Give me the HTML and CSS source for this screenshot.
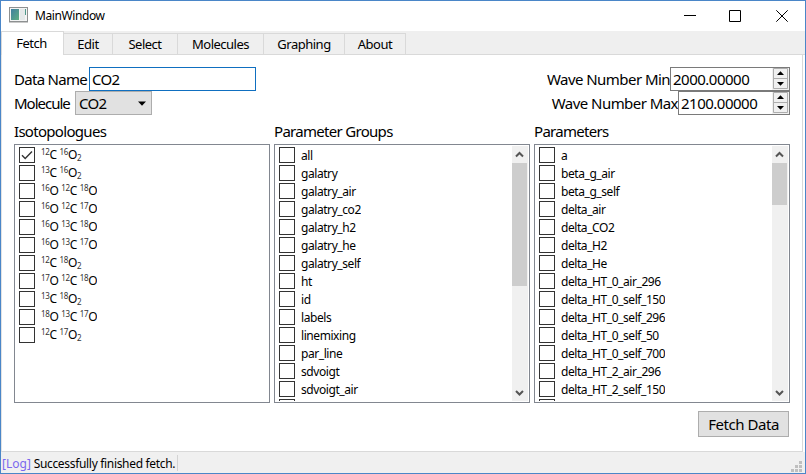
FILE: index.html
```html
<!DOCTYPE html>
<html lang="en">
<head>
<meta charset="utf-8">
<title>MainWindow</title>
<link rel="stylesheet" href="styles.css">
</head>
<body>
<div class="window">
  <header class="titlebar">
    <svg class="app-icon" width="19" height="16" viewBox="0 0 19 16">
      <defs><linearGradient id="g" x1="0" y1="0" x2="1" y2="1"><stop offset="0" stop-color="#3f7fa0"/><stop offset="1" stop-color="#5dae82"/></linearGradient></defs>
      <rect x=".5" y=".5" width="18" height="14" fill="#f3f4f4" stroke="#8d9091"/>
      <path d="M0 15.5h19" stroke="#c9c9c9"/>
      <rect x="2" y="2" width="8" height="11" fill="url(#g)"/>
      <rect x="11" y="2" width="5" height="11" fill="#e4e9ea"/>
      <path d="M16.5 2v6" stroke="#4f9a8c"/>
    </svg>
    <span class="title">MainWindow</span>
    <svg class="controls" width="106" height="13" viewBox="0 0 106 13" fill="none" stroke="#000">
      <path d="M0 5.5h12M45.5 .5h11v11h-11z"/><path d="M92.3 .3l11.4 11.4M103.7 .3L92.3 11.7"/>
    </svg>
  </header>
  <nav class="tabs">
    <span class="tab active">Fetch</span><span class="tab edit">Edit</span><span class="tab select">Select</span><span class="tab molecules">Molecules</span><span class="tab graphing">Graphing</span><span class="tab about">About</span>
  </nav>
  <main class="pane">
    <div class="row">
      <label class="lbl data-name">Data Name</label><span class="field line-edit">CO2</span>
      <label class="lbl wave push">Wave Number Min</label><span class="field spin min"><span>2000.00000</span><span class="steps"><svg viewBox="0 0 15 21"><path d="M.5 .5h14v20H.5zM0 10.5h15"/><path class="ink" d="M4 7L7.5 3.2L11 7zM4 14L7.5 17.8L11 14z"/></svg></span></span>
    </div>
    <div class="row">
      <label class="lbl molecule">Molecule</label><span class="combo">CO2<svg width="8" height="5" viewBox="0 0 8 5"><path d="M0 .5h8L4 4.7z"/></svg></span>
      <label class="lbl wave push">Wave Number Max</label><span class="field spin max"><span>2100.00000</span><span class="steps"><svg viewBox="0 0 15 21"><path d="M.5 .5h14v20H.5zM0 10.5h15"/><path class="ink" d="M4 7L7.5 3.2L11 7zM4 14L7.5 17.8L11 14z"/></svg></span></span>
    </div>
    <div class="columns">
      <section>
        <h2 class="iso-h">Isotopologues</h2>
        <div class="list"><ul class="iso">
          <li><i><svg width="14" height="14" viewBox="0 0 14 14"><path d="M2 7.2l3.2 3.2L12 3.6"/></svg></i><span><sup>12</sup>C <sup>16</sup>O<sub>2</sub></span></li>
          <li><i></i><span><sup>13</sup>C <sup>16</sup>O<sub>2</sub></span></li>
          <li><i></i><span><sup>16</sup>O <sup>12</sup>C <sup>18</sup>O</span></li>
          <li><i></i><span><sup>16</sup>O <sup>12</sup>C <sup>17</sup>O</span></li>
          <li><i></i><span><sup>16</sup>O <sup>13</sup>C <sup>18</sup>O</span></li>
          <li><i></i><span><sup>16</sup>O <sup>13</sup>C <sup>17</sup>O</span></li>
          <li><i></i><span><sup>12</sup>C <sup>18</sup>O<sub>2</sub></span></li>
          <li><i></i><span><sup>17</sup>O <sup>12</sup>C <sup>18</sup>O</span></li>
          <li><i></i><span><sup>13</sup>C <sup>18</sup>O<sub>2</sub></span></li>
          <li><i></i><span><sup>18</sup>O <sup>13</sup>C <sup>17</sup>O</span></li>
          <li><i></i><span><sup>12</sup>C <sup>17</sup>O<sub>2</sub></span></li>
        </ul></div>
      </section>
      <section>
        <h2 class="groups-h">Parameter Groups</h2>
        <div class="list"><ul>
          <li><i></i><span>all</span></li><li><i></i><span>galatry</span></li><li><i></i><span>galatry_air</span></li><li><i></i><span>galatry_co2</span></li><li><i></i><span>galatry_h2</span></li><li><i></i><span>galatry_he</span></li><li><i></i><span>galatry_self</span></li><li><i></i><span>ht</span></li><li><i></i><span>id</span></li><li><i></i><span>labels</span></li><li><i></i><span>linemixing</span></li><li><i></i><span>par_line</span></li><li><i></i><span>sdvoigt</span></li><li><i></i><span>sdvoigt_air</span></li><li><i></i></li>
        </ul>
        <div class="scrollbar"><svg viewBox="0 0 16 17"><path d="M4 10.5L7.5 7L11 10.5"/></svg><b class="thumb-long"></b><svg class="down" viewBox="0 0 16 17"><path d="M4 7L7.5 10.5L11 7"/></svg></div></div>
      </section>
      <section>
        <h2 class="params-h">Parameters</h2>
        <div class="list"><ul class="params">
          <li><i></i><span>a</span></li><li><i></i><span>beta_g_air</span></li><li><i></i><span>beta_g_self</span></li><li><i></i><span>delta_air</span></li><li><i></i><span>delta_CO2</span></li><li><i></i><span>delta_H2</span></li><li><i></i><span>delta_He</span></li><li><i></i><span>delta_HT_0_air_296</span></li><li><i></i><span>delta_HT_0_self_150</span></li><li><i></i><span>delta_HT_0_self_296</span></li><li><i></i><span>delta_HT_0_self_50</span></li><li><i></i><span>delta_HT_0_self_700</span></li><li><i></i><span>delta_HT_2_air_296</span></li><li><i></i><span>delta_HT_2_self_150</span></li><li><i></i></li>
        </ul>
        <div class="scrollbar"><svg viewBox="0 0 16 17"><path d="M4 10.5L7.5 7L11 10.5"/></svg><b class="thumb-short"></b><svg class="down" viewBox="0 0 16 17"><path d="M4 7L7.5 10.5L11 7"/></svg></div></div>
      </section>
    </div>
    <button class="fetch">Fetch Data</button>
  </main>
  <footer class="status">
    <span class="log"><em>[Log]</em> Successfully finished fetch.</span>
    <svg class="grip" width="11" height="11" viewBox="0 0 11 11"><path d="M8 0h3v3H8zM4 4h3v3H4zM8 4h3v3H8zM0 8h3v3H0zM4 8h3v3H4zM8 8h3v3H8z"/></svg>
  </footer>
</div>
</body>
</html>
```
FILE: styles.css
```css
* { box-sizing: border-box; }
body { margin: 0; background: #fff; color: #000; font: 12px/18px "Noto Sans", sans-serif; }
.window { width: 806px; height: 474px; border: 1px solid #4a86c8; display: flex; flex-direction: column; background: #fff; overflow: hidden; }
.titlebar { height: 30px; flex: none; display: flex; padding: 6px 15px 0 8px; }
.app-icon { flex: none; }
.title { margin-left: 7px; letter-spacing: -.4px; }
.controls { margin: 3px 0 0 auto; }
.tabs { height: 24px; flex: none; display: flex; align-items: flex-end; background: #efefef; box-shadow: inset 0 -1px #d9d9d9; font-size: 13px; letter-spacing: -.5px; }
.tab { height: 22px; border: 1px solid #d9d9d9; border-left: 0; text-align: center; line-height: 21px; white-space: nowrap; }
.active { width: 63px; height: 24px; background: #fff; border-bottom: 0; border-left: 1px solid #d9d9d9; line-height: 23px; padding-right: 2px; }
.edit { width: 49px; }
.select { width: 65px; }
.molecules { width: 86px; }
.graphing { width: 81px; }
.about { width: 61px; }
.pane { width: 802px; height: 397px; flex: none; border-right: 1px solid #d9d9d9; border-bottom: 1px solid #d9d9d9; border-left: 1px solid #e3e3e3; padding: 12px 12px 0 12px; display: flex; flex-direction: column; font-size: 15px; letter-spacing: -.7px; }
.row { height: 24px; display: flex; line-height: 24px; white-space: nowrap; flex: none; }
.lbl { flex: none; }
.data-name { width: 75px; }
.molecule { width: 61px; letter-spacing: -1px; }
.wave { letter-spacing: -.55px; }
.push { margin-left: auto; }
.field { border: 1px solid #7a7a7a; height: 24px; line-height: 22px; padding-left: 2px; }
.line-edit { width: 167px; border-color: #0f6fc0; }
.spin { display: flex; justify-content: space-between; letter-spacing: -.5px; }
.min { width: 120px; }
.max { width: 112px; }
.steps { width: 17px; background: #f0f0f0; padding: 1px 1px 0; }
.steps svg { display: block; width: 15px; height: 21px; margin-top: -1px; fill: none; stroke: #adadad; }
.steps .ink { fill: #000; stroke: none; }
.combo { width: 77px; border: 1px solid #adadad; background: #e1e1e1; line-height: 22px; padding: 0 5px 0 3px; display: flex; align-items: center; justify-content: space-between; }
.columns { display: flex; gap: 4px; margin: 7px -1px 0 0; flex: none; }
section { width: 256px; flex: none; }
h2 { font-weight: 400; font-size: 15px; line-height: 18px; height: 22px; margin: 0; white-space: nowrap; }
.list { height: 259px; border: 1px solid #828790; padding: 1px 1px 1px 4px; display: flex; justify-content: space-between; }
ul { list-style: none; margin: 0; padding: 1px 0 0; height: 255px; overflow: hidden; font-size: 12px; letter-spacing: -.43px; }
li { height: 18px; display: flex; line-height: 18px; white-space: nowrap; }
i { width: 16px; height: 16px; border: 1px solid #333; flex: none; margin-right: 6px; }
i svg { display: block; fill: none; stroke: #333; stroke-width: 1.4; }
.iso li span { line-height: 15px; letter-spacing: -.35px; }
sup, sub { font-size: 8px; line-height: 0; color: #333; vertical-align: baseline; position: relative; }
sup { top: -4px; }
sub { top: 2px; }
.scrollbar { width: 16px; background: #f0f0f0; display: flex; flex-direction: column; }
.scrollbar svg { display: block; width: 16px; height: 17px; fill: none; stroke: #555; stroke-width: 2; }
.scrollbar .down { margin-top: auto; }
.scrollbar b { background: #cdcdcd; width: 15px; }
.thumb-long { height: 123px; }
.thumb-short { height: 42px; }
.fetch { align-self: flex-end; width: 91px; height: 26px; margin: 8px 1px 0 0; padding: 0; border: 1px solid #adadad; background: #e1e1e1; color: #000; font: 15px/24px "Noto Sans", sans-serif; letter-spacing: -.45px; white-space: nowrap; }
.status { flex: 1; background: #f0f0f0; display: flex; justify-content: space-between; padding: 3px 3px 2px 1px; line-height: 18px; }
.log { width: 176px; height: 16px; border-right: 1px solid #d3d3d3; white-space: nowrap; letter-spacing: -.32px; }
.log em { font-style: normal; color: #7b68ee; letter-spacing: 0; }
.grip { fill: #bfbfbf; margin-top: 6px; }
```
